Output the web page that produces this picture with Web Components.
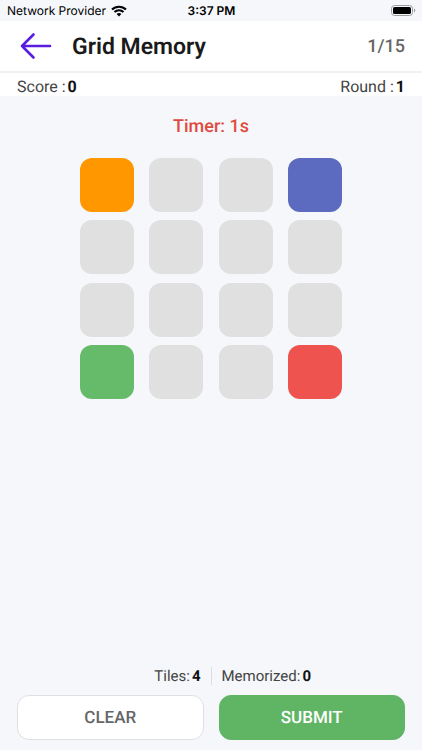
<!DOCTYPE html>
<html lang="en">
<head>
<meta charset="utf-8">
<meta name="viewport" content="width=device-width, initial-scale=1">
<title>Grid Memory</title>
<style>
  :root {
    --gm-bg: #f5f7fb;
    --gm-surface: #fff;
    --gm-border: #e0e0e2;
    --gm-text: #1a1a1a;
    --gm-text-muted: #666;
    --gm-accent: #5a1ce0;
    --gm-danger: #e04a40;
    --gm-success: #60b565;
    --gm-gutter: 17px;
  }
  body {
    margin: 0;
    background: var(--gm-bg);
    color: var(--gm-text);
    font-family: Roboto, "Liberation Sans", sans-serif;
    text-rendering: geometricPrecision;
  }
</style>
</head>
<body>
<grid-memory-app></grid-memory-app>

<script>
/** <status-bar> — carrier, clock and battery */
class StatusBar extends HTMLElement {
  connectedCallback() {
    this.attachShadow({ mode: "open" });
    this.shadowRoot.innerHTML = `
      <style>
        :host {
          display: grid;
          grid-template-columns: 1fr auto 1fr;
          align-items: center;
          height: 21px;
          padding: 0 6px 0 7px;
          font: 500 12px/20px Inter, "Liberation Sans", sans-serif;
          color: #000;
          flex-shrink: 0;
        }
        .carrier { display: flex; align-items: center; gap: 5px; font-weight: 400; white-space: nowrap; }
        time { font-weight: 600; }
        svg { display: block; }
        .battery { justify-self: end; }
      </style>
      <span class="carrier">
        <slot></slot>
        <svg width="16" height="12" viewBox="0 0 16 12" aria-hidden="true">
          <path d="M1 4.6a10 10 0 0 1 14 0M3.5 7.1a6.4 6.4 0 0 1 9 0" fill="none" stroke="#000" stroke-width="2.1"/>
          <path d="M8 11.5 5.6 9.1a3.5 3.5 0 0 1 4.8 0z"/>
        </svg>
      </span>
      <time><slot name="time"></slot></time>
      <svg class="battery" width="25" height="12" viewBox="0 0 25 12" role="img" aria-label="Battery full">
        <rect x=".5" y=".5" width="21" height="10" rx="3" fill="none" stroke="#9b9ca0"/>
        <rect x="2" y="2" width="18" height="7" rx="1.6"/>
        <path d="M23 3.5a2.2 2.2 0 0 1 0 4z" fill="#9b9ca0"/>
      </svg>
    `;
  }
}

/** <game-header> — back link, title (default slot) and progress */
class GameHeader extends HTMLElement {
  connectedCallback() {
    this.attachShadow({ mode: "open" });
    this.shadowRoot.innerHTML = `
      <style>
        :host {
          display: flex;
          align-items: center;
          height: 50px;
          padding: 0 var(--gm-gutter);
          background: var(--gm-surface);
          border-bottom: 2px solid #f0f0f2;
          flex-shrink: 0;
        }
        a { display: block; margin-right: 17px; color: var(--gm-accent); }
        svg { display: block; }
        h1 { margin: 0; padding-top: 2px; flex: 1; font-size: 23px; line-height: 28px; font-weight: 600; }
        .progress { padding-top: 2px; font-size: 18px; line-height: 24px; font-weight: 500; color: var(--gm-text-muted); }
      </style>
      <a href="#" aria-label="Back">
        <svg width="38" height="30" viewBox="0 0 38 30" fill="none" stroke="currentColor"
             stroke-width="2.6" stroke-linecap="round" stroke-linejoin="round" aria-hidden="true">
          <path d="M33 15H5M16.5 3.5 5 15l11.5 11.5"/>
        </svg>
      </a>
      <h1><slot></slot></h1>
      <span class="progress"><slot name="progress"></slot></span>
    `;
  }
}

/** <stat-label label="…"> — caption followed by a bold value (slot) */
class StatLabel extends HTMLElement {
  connectedCallback() {
    this.attachShadow({ mode: "open" });
    this.shadowRoot.innerHTML = `
      <style>
        :host { display: flex; gap: 2px; white-space: nowrap; color: #444; }
        b { font-weight: 700; color: #111; }
      </style>
      <span></span><b><slot></slot></b>
    `;
    this.shadowRoot.querySelector("span").textContent = this.getAttribute("label");
  }
}

/** <memory-grid size="4"> — lit is a list of "index:colour" pairs */
class MemoryGrid extends HTMLElement {
  connectedCallback() {
    this.attachShadow({ mode: "open" });
    this.shadowRoot.innerHTML = `
      <style>
        :host {
          display: grid;
          grid-template-columns: repeat(4, 54px);
          justify-content: space-between;
          align-content: space-between;
          width: 262px;
          min-height: 241px;
        }
        button {
          height: 54px;
          padding: 0;
          border: none;
          border-radius: 12px;
          background: #e0e0e0;
          cursor: pointer;
        }
      </style>
    `;
    const lit = new Map(this.getAttribute("lit").split(" ").map(p => p.split(":")));
    const size = Number(this.getAttribute("size"));
    for (let i = 0; i < size * size; i++) {
      const tile = document.createElement("button");
      tile.type = "button";
      tile.setAttribute("aria-label", `Tile ${i + 1}`);
      if (lit.has(String(i))) tile.style.background = lit.get(String(i));
      this.shadowRoot.appendChild(tile);
    }
  }
}

/** <action-button variant="primary|plain"> */
class ActionButton extends HTMLElement {
  connectedCallback() {
    this.attachShadow({ mode: "open" });
    this.shadowRoot.innerHTML = `
      <style>
        :host { display: block; flex: 1; }
        button {
          display: block;
          box-sizing: border-box;
          width: 100%;
          height: 45px;
          padding: 0 6px;
          border: 1px solid var(--gm-border);
          border-radius: 12px;
          background: var(--gm-surface);
          color: var(--gm-text-muted);
          font: 500 17px/24px Roboto, "Liberation Sans", sans-serif;
          text-rendering: inherit;
          cursor: pointer;
        }
        :host([variant="primary"]) button {
          border-color: var(--gm-success);
          background: var(--gm-success);
          color: #fff;
        }
      </style>
      <button type="button"><slot></slot></button>
    `;
  }
}

/** <grid-memory-app> — the whole screen */
class GridMemoryApp extends HTMLElement {
  connectedCallback() {
    this.attachShadow({ mode: "open" });
    this.shadowRoot.innerHTML = `
      <style>
        :host { display: flex; flex-direction: column; min-height: 100vh; }
        .score {
          display: flex;
          justify-content: space-between;
          padding: 5px var(--gm-gutter) 0;
          background: var(--gm-surface);
          font-size: 16px;
          line-height: 18px;
        }
        main {
          flex: 1;
          display: flex;
          flex-direction: column;
          align-items: center;
          padding-top: 19px;
        }
        .timer {
          margin: 0 0 19px;
          font-size: 18px;
          line-height: 24px;
          font-weight: 500;
          color: var(--gm-danger);
        }
        .stats {
          display: grid;
          grid-template-columns: 1fr 1px 1fr;
          gap: 10px;
          margin-bottom: 10px;
          font-size: 15px;
          line-height: 18px;
        }
        .stats stat-label:first-child { justify-self: end; }
        .divider { background: #dcdde0; }
        .actions { display: flex; gap: 15px; padding: 0 var(--gm-gutter) 10px; }
      </style>
      <status-bar>Network Provider<span slot="time">3:37 PM</span></status-bar>
      <game-header>Grid Memory<span slot="progress">1/15</span></game-header>
      <div class="score">
        <stat-label label="Score :">0</stat-label>
        <stat-label label="Round :">1</stat-label>
      </div>
      <main>
        <p class="timer">Timer: 1s</p>
        <memory-grid size="4" lit="0:#ff9800 3:#5c6bc0 12:#66bb6a 15:#ef5350"></memory-grid>
      </main>
      <footer>
        <div class="stats">
          <stat-label label="Tiles:">4</stat-label>
          <span class="divider"></span>
          <stat-label label="Memorized:">0</stat-label>
        </div>
        <div class="actions">
          <action-button>CLEAR</action-button>
          <action-button variant="primary">SUBMIT</action-button>
        </div>
      </footer>
    `;
  }
}

customElements.define("status-bar", StatusBar);
customElements.define("game-header", GameHeader);
customElements.define("stat-label", StatLabel);
customElements.define("memory-grid", MemoryGrid);
customElements.define("action-button", ActionButton);
customElements.define("grid-memory-app", GridMemoryApp);
</script>
</body>
</html>
